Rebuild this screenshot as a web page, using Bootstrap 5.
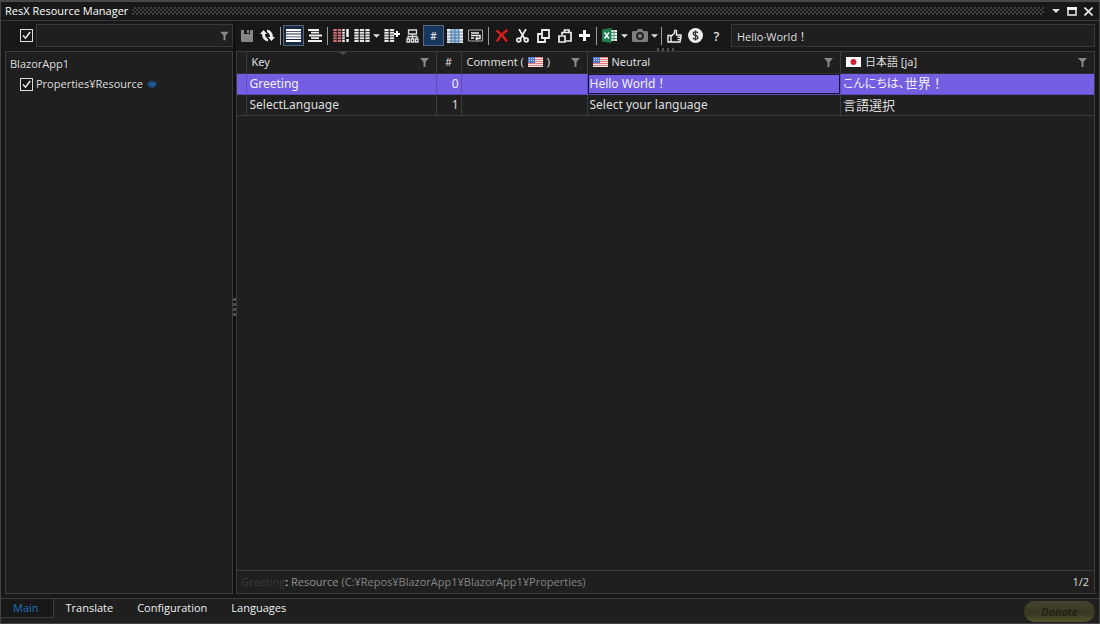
<!DOCTYPE html>
<html lang="en" data-bs-theme="dark">
<head>
<meta charset="utf-8">
<meta name="viewport" content="width=device-width, initial-scale=1">
<title>ResX Resource Manager</title>
<link rel="stylesheet" href="https://cdn.jsdelivr.net/npm/bootstrap@5.3.0/dist/css/bootstrap.min.css">
<style>
:root { --line: #3c3c3c; --panel: #1f1f1f; --chrome: #181818; --ink: #dedede; --pick: #745fe3; }
body { font-family: "Open Sans", "Noto Sans CJK JP", sans-serif; font-size: 11px; line-height: 16px; color: var(--ink); background: var(--chrome); }
.app-window { border: 1px solid #444; border-top: 2px solid #484848; }
.title-bar { height: 19px; border-bottom: 1px solid #383838; padding: 0 3px 0 4px; }
.title-bar h1 { font-size: 11px; line-height: 16px; }
.grip { height: 8px; background: conic-gradient(#484848 25%, transparent 0 50%, #484848 0 75%, transparent 0) 0 0 / 4px 4px; opacity: .8; }
.win-btn { width: 16px; height: 16px; }
.plain { background: none; border: 1px solid transparent; padding: 0; color: var(--ink); display: inline-flex; align-items: center; justify-content: center; flex: none; }
.side-col { width: 228px; }
.tool-row { height: 30px; padding-bottom: 1px; }
.tick-lead { padding-left: 15px; }
.field { background: var(--panel); border: 1px solid #383838; color: var(--ink); height: 23px; padding: 0 5px; border-radius: 0; font-size: 11px; min-width: 0; }
.tick { appearance: none; width: 13px; height: 13px; margin: 0 3px 0 0; border: 1px solid #ddd; background: #191919 url("data:image/svg+xml,%3Csvg xmlns='http://www.w3.org/2000/svg' viewBox='0 0 11 11'%3E%3Cpath d='M2 5.5 4.5 8.2 9.2 2' fill='none' stroke='%23eee' stroke-width='1.5'/%3E%3C/svg%3E") center / 11px; flex: none; }
.pane { background: var(--panel); border: 1px solid var(--line); min-height: 0; }
.tree-item { padding: 4px 0 0 14px; }
.tb { width: 21px; height: 21px; }
.tb-slim { width: 19px; }
.tb-caret { width: 9px; height: 21px; }
.tb-on { border-color: #56667c; background: #1a2a42; }
.tb-hash { background: #17375f; font-size: 10px; font-weight: 600; }
.tb-help { font-size: 13px; font-weight: 600; }
.sep { width: 1px; height: 18px; margin: 0 2px; background: #9a9a9a; flex: none; }
.splitter { width: 3px; background: #111; }
.dots-v { width: 3px; height: 19px; background: repeating-linear-gradient(#505050 0 3px, transparent 3px 5px); }
.dots-h { top: 46px; left: 656px; width: 19px; height: 3px; background: repeating-linear-gradient(90deg, #505050 0 2px, transparent 2px 5px); }
.sort-mark { top: 0; left: 92px; line-height: 0; }
.res-grid { table-layout: fixed; width: 100%; border-collapse: collapse; font-family: "Noto Sans", "Noto Sans CJK JP", sans-serif; font-size: 12px; }
.res-grid th { height: 21px; font-weight: 400; font-size: 11px; padding: 0 7px 0 5px; border-right: 1px solid var(--line); border-bottom: 1px solid #303030; line-height: 16px; position: relative; }
.res-grid td { height: 21px; padding: 0 2px; border-right: 1px solid var(--line); border-bottom: 1px solid var(--line); white-space: nowrap; line-height: 18px; overflow: hidden; }
.res-grid tr > :last-child { border-right: 0; }
.res-grid .key-cell { padding-left: 3px; }
.picked td { background: var(--pick); color: #f2f0ff; border-color: #5c4bb8; }
.picked td.focus-cell { box-shadow: inset 0 0 0 1px #17133a; }
.c-head { width: 9px; } .c-key { width: 190px; } .c-idx { width: 25px; } .c-com { width: 126px; }
.res-grid .ja-cell { font-size: 13px; line-height: 16px; }
.kana { font-feature-settings: "palt"; font-size: 12px; }
.status { height: 23px; border-top: 1px solid var(--line); padding: 0 5px 0 4px; }
.dim { color: #858585; } .dimmer { color: #3a3a3a; }
.tabs-bar { height: 25px; border-top: 1px solid var(--line); background: var(--panel); }
.tabs-bar .nav-link { color: #eee; padding: 0 12px; height: 19px; line-height: 18px; border-radius: 0; }
.tabs-bar .nav-link.active { color: #2173bd; background: var(--chrome); border-right: 1px solid var(--line); border-bottom: 1px solid var(--line); padding-right: 14px; }
.donate { width: 71px; height: 21px; margin: 2px 4px 0 0; border: 0; border-radius: 11px; background: linear-gradient(#45422e, #373820 60%, #52512c); color: #1d1d17; font: italic 600 11px/18px "Open Sans", sans-serif; }
</style>
</head>
<body>
<svg class="d-none" xmlns="http://www.w3.org/2000/svg">
  <symbol id="funnel" viewBox="0 0 9 9"><path d="M0 0h9L5.5 4v5h-2V4z" fill="#888"/></symbol>
  <symbol id="caret" viewBox="0 0 8 4"><path d="M0 0h8L4 4z" fill="currentColor"/></symbol>
  <symbol id="us" viewBox="0 0 15 10"><path fill="#f3e8e8" d="M0 0h15v10H0z"/><path stroke="#e47c7c" d="M0 .5h15M0 2.5h15M0 4.5h15M0 6.5h15M0 8.5h15"/><path fill="#4f78c8" d="M0 0h7v6H0z"/><path stroke="#b9cdf0" stroke-dasharray="1 1" d="M1 1.5h5M1 3.5h5"/></symbol>
  <symbol id="jp" viewBox="0 0 15 10"><path fill="#fff" d="M0 0h15v10H0z"/><circle cx="7.5" cy="5" r="3" fill="#d32038"/></symbol>
</svg>
<div class="app-window d-flex flex-column vh-100 overflow-hidden position-relative">
  <header class="title-bar d-flex align-items-center">
    <h1 class="m-0 fw-normal text-nowrap">ResX Resource Manager</h1>
    <div class="grip flex-grow-1 ms-1 me-1"></div>
    <button class="plain win-btn" aria-label="Menu"><svg width="8" height="4"><use href="#caret"/></svg></button>
    <button class="plain win-btn" aria-label="Maximize"><svg width="10" height="9"><path d="M1 1h8v7H1z" fill="none" stroke="#eee" stroke-width="1.5"/><path d="M0 0h10v3H0z" fill="#eee"/></svg></button>
    <button class="plain win-btn" aria-label="Close"><svg width="9" height="9"><path d="M.5.5l8 8m0-8l-8 8" stroke="#eee" stroke-width="1.6"/></svg></button>
  </header>

  <div class="d-flex flex-grow-1 px-1 pb-1" style="min-height:0">
    <aside class="side-col d-flex flex-column flex-shrink-0">
      <div class="tool-row tick-lead d-flex align-items-center">
        <input class="tick" type="checkbox" checked aria-label="Select all">
        <div class="position-relative flex-grow-1 d-flex">
          <input class="field w-100" type="text" aria-label="Filter files">
          <svg class="position-absolute top-50 end-0 translate-middle-y me-1" width="9" height="9"><use href="#funnel"/></svg>
        </div>
      </div>
      <section class="pane flex-grow-1">
        <div class="px-1 pt-1">BlazorApp1</div>
        <label class="tree-item d-flex align-items-center"><input class="tick" type="checkbox" checked>Properties¥Resource
          <svg class="ms-1" width="10" height="7"><path d="M0 3q1-3 5-3t5 3q-2 4-5 4T0 3z" fill="#174d7c"/><path d="M3 2l2 2 3-2" stroke="#2877b0" fill="none"/></svg></label>
      </section>
    </aside>
    <div class="splitter d-flex align-items-center justify-content-center flex-shrink-0"><div class="dots-v"></div></div>
    <main class="d-flex flex-column flex-grow-1" style="min-width:0">
      <div class="tool-row d-flex align-items-center" role="toolbar">
        <button class="plain tb" aria-label="Save"><svg width="12" height="12"><path d="M0 0h12v12H1L0 11z" fill="#858585"/><path d="M3 0h6v4H3z" fill="#191919"/><path d="M6 0h2v3H6z" fill="#858585"/></svg></button>
        <button class="plain tb" aria-label="Reload"><svg width="15" height="13"><path d="M0 5l3.500-4L7 5H5q-.2 3 3 5v2.500Q2 11 2 5z" fill="#eee"/><path d="M15 8l-3.500 4L8 8h2q.2-3-3-5V.5Q13 2 13 8z" fill="#eee"/></svg></button>
        <span class="sep"></span>
        <button class="plain tb tb-on" aria-label="Left aligned"><svg width="15" height="13"><path d="M0 1h15M0 3.700h15M0 6.500h15M0 9.200h15M0 12h15" stroke="#fff" stroke-width="1.8"/></svg></button>
        <button class="plain tb" aria-label="Centered"><svg width="14" height="13"><path d="M0 1h11M3 3.700h8M1 6.500h13M3 9.200h8M0 12h14" stroke="#eee" stroke-width="1.8"/></svg></button>
        <span class="sep"></span>
        <button class="plain tb" aria-label="Columns with errors"><svg width="16" height="13"><path d="M2 0v13M6.500 0v13" stroke="#d16b74" stroke-width="3.500" stroke-dasharray="2 .75"/><path d="M10.500 0v13" stroke="#eee" stroke-width="2.500" stroke-dasharray="2 .75"/><path d="M14.500 0v8m0 2v3" stroke="#fff" stroke-width="2.400"/></svg></button>
        <button class="plain tb" aria-label="Columns"><svg width="16" height="13"><path d="M2.500 0v13M8 0v13M13.500 0v13" stroke="#e4e4e4" stroke-width="4.300" stroke-dasharray="2 .75"/></svg></button>
        <button class="plain tb-caret" aria-label="Column options"><svg width="7" height="4"><use href="#caret"/></svg></button>
        <button class="plain tb" aria-label="Add column"><svg width="16" height="13"><path d="M2.500 0v13M8 0v13" stroke="#e4e4e4" stroke-width="4.300" stroke-dasharray="2 .75"/><path d="M10 5h6M13 2v6" stroke="#fff" stroke-width="2"/></svg></button>
        <button class="plain tb" aria-label="Hierarchy"><svg width="13" height="14" fill="none" stroke="#ddd" stroke-width="1.300"><path d="M2.500 1h8v4h-8zM6.500 5v5M2 10V7.500h9V10M1 10h2.500v3H1zM5.300 10h2.500v3H5.300zM9.500 10H12v3H9.500z"/></svg></button>
        <button class="plain tb tb-on tb-hash" aria-label="Index column">#</button>
        <button class="plain tb" aria-label="Highlight"><svg width="16" height="14"><path fill="#edf5ff" d="M0 0h16v14H0z"/><path fill="#8fc6f8" d="M4 0h8v14H4z"/><path d="M4 0v14M8 0v14M12 0v14M0 3h16M0 6h16M0 9h16M0 12h16" stroke="#58687b" stroke-width=".8"/></svg></button>
        <button class="plain tb" aria-label="Wrap"><svg width="15" height="13" fill="none" stroke="#eee"><path d="M.5 1h14v11H.5z" stroke="#aaa"/><path d="M3 4h8M3 6.500h9v3H8M3 9h3" stroke-width="1.500"/><path d="M9.500 7v5L7 9.500z" fill="#eee" stroke="none"/></svg></button>
        <span class="sep"></span>
        <button class="plain tb" aria-label="Delete"><svg width="14" height="14"><path d="M1.500 1.500Q8 6 12 12.500M12.500 1Q5 6 2 12.500" fill="none" stroke="#d61e1e" stroke-width="2.400"/></svg></button>
        <button class="plain tb" aria-label="Cut"><svg width="13" height="14" fill="none" stroke="#eee" stroke-width="1.700"><path d="M3 0l5.500 9.500M10 0L4.500 9.500"/><circle cx="2.800" cy="11" r="1.900"/><circle cx="10.200" cy="11" r="1.900"/></svg></button>
        <button class="plain tb" aria-label="Copy"><svg width="13" height="14" fill="none" stroke="#eee" stroke-width="1.800"><path d="M5 1h7v8H5zM5 5H1v8h7V9"/></svg></button>
        <button class="plain tb" aria-label="Paste"><svg width="14" height="14" fill="none" stroke="#eee" stroke-width="1.700"><path d="M4 6V3.500h9V12H8M6.500 3V1H11v2M1 7h6v6H1z"/></svg></button>
        <button class="plain tb tb-slim" aria-label="Add"><svg width="11" height="11"><path d="M5.500 0v11M0 5.500h11" stroke="#fff" stroke-width="3"/></svg></button>
        <span class="sep"></span>
        <button class="plain tb" aria-label="Excel"><svg width="16" height="15"><path d="M9 2h6v11H9z" fill="#f4f4f4"/><path d="M9 4.500h6M9 7.500h6M9 10.500h6M12 2v11" stroke="#217346" stroke-width=".7"/><path d="M0 1.500L9.500 0v15L0 13.500z" fill="#1f8150"/><path d="M2.500 4.500l4.500 6m0-6l-4.500 6" stroke="#fff" stroke-width="1.400"/></svg></button>
        <button class="plain tb-caret" aria-label="Excel options"><svg width="7" height="4"><use href="#caret"/></svg></button>
        <button class="plain tb" aria-label="Snapshot"><svg width="16" height="13"><path d="M1 2h3.500L6 0h4l1.500 2H15l1 1v9l-1 1H1l-1-1V3z" fill="#7d7d7d"/><circle cx="8" cy="7" r="3" fill="none" stroke="#202020" stroke-width="1.800"/></svg></button>
        <button class="plain tb-caret" aria-label="Snapshot options"><svg width="7" height="4"><use href="#caret"/></svg></button>
        <span class="sep"></span>
        <button class="plain tb" aria-label="Like"><svg width="15" height="14" fill="none" stroke="#eee" stroke-width="1.400"><path d="M1 6.500h3V13H1zM4 7.500L7.500 4V2Q8 .5 9.500 1.500V6H14v2.300l-.5 2L13 13H4M10.500 8.300H14M10.500 10.600h3"/></svg></button>
        <button class="plain tb" aria-label="Donate money"><svg width="15" height="15"><circle cx="7.500" cy="7.500" r="7.500" fill="#eee"/><path d="M10 4.800Q9 3.900 7.500 3.900 5.200 3.900 5.200 5.600 5.200 7 7.500 7.500 10 8 10 9.500q0 1.600-2.500 1.600-1.600 0-2.600-.9M7.500 2.500v10" fill="none" stroke="#333" stroke-width="1.300"/></svg></button>
        <button class="plain tb tb-help" aria-label="Help">?</button>
        <input class="field flex-grow-1 ms-1" type="text" value="Hello·World！" aria-label="Selected text">
      </div>
      <section class="pane flex-grow-1 d-flex flex-column">
        <div class="flex-grow-1 overflow-hidden">
          <table class="res-grid">
            <colgroup><col class="c-head"><col class="c-key"><col class="c-idx"><col class="c-com"><col><col></colgroup>
            <thead><tr>
              <th></th>
              <th><span class="position-absolute sort-mark"><svg width="8" height="3"><path d="M0 0h8L4 3z" fill="#4a4a4a"/></svg></span><div class="d-flex align-items-center justify-content-between">Key<svg width="9" height="9"><use href="#funnel"/></svg></div></th>
              <th class="text-center px-0">#</th>
              <th><div class="d-flex align-items-center">Comment (<svg class="mx-1" width="15" height="10"><use href="#us"/></svg>)<svg class="ms-auto" width="9" height="9"><use href="#funnel"/></svg></div></th>
              <th><div class="d-flex align-items-center"><svg class="me-1" width="15" height="10"><use href="#us"/></svg>Neutral<svg class="ms-auto" width="9" height="9"><use href="#funnel"/></svg></div></th>
              <th><div class="d-flex align-items-center"><svg class="me-1" width="15" height="10"><use href="#jp"/></svg><span lang="ja">日本語 [ja]</span><svg class="ms-auto" width="9" height="9"><use href="#funnel"/></svg></div></th>
            </tr></thead>
            <tbody>
              <tr class="picked"><td></td><td class="key-cell">Greeting</td><td class="text-end">0</td><td></td><td class="focus-cell">Hello World！</td><td class="ja-cell" lang="ja"><span class="kana">こんにちは、</span>世界！</td></tr>
              <tr><td></td><td class="key-cell">SelectLanguage</td><td class="text-end">1</td><td></td><td>Select your language</td><td class="ja-cell" lang="ja">言語選択</td></tr>
            </tbody>
          </table>
        </div>
        <div class="status d-flex align-items-center">
          <span class="dimmer">Greeting</span><span class="text-light">:&nbsp;</span><span class="dim"><span class="text-white-50">Resource</span> (C:¥Repos¥BlazorApp1¥BlazorApp1¥Properties)</span>
          <span class="ms-auto">1/2</span>
        </div>
      </section>
    </main>
  </div>
  <div class="dots-h position-absolute"></div>

  <footer class="tabs-bar d-flex justify-content-between flex-shrink-0">
    <nav class="nav">
      <a class="nav-link active" href="#main">Main</a>
      <a class="nav-link" href="#translate">Translate</a>
      <a class="nav-link" href="#configuration">Configuration</a>
      <a class="nav-link" href="#languages">Languages</a>
    </nav>
    <button class="donate">Donate</button>
  </footer>
</div>
<script src="https://cdn.jsdelivr.net/npm/bootstrap@5.3.0/dist/js/bootstrap.bundle.min.js"></script>
</body>
</html>
